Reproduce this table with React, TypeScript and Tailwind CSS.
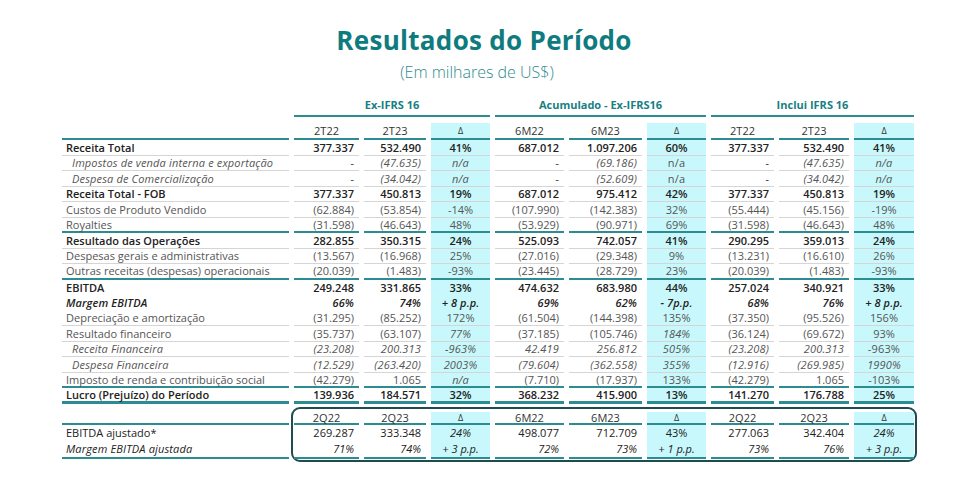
type Kind = 'bold' | 'reg' | 'ital' | 'margin';
type Line = 'gray' | 'teal' | 'thick' | 'none';

interface Row {
  label: string;
  kind: Kind;
  v: string[];
  line: Line;
}

// a leading "*" flips the italic style of that single value
const rows: Row[] = [
  { label: 'Receita Total', kind: 'bold', line: 'gray', v: ['377.337', '532.490', '41%', '687.012', '1.097.206', '60%', '377.337', '532.490', '41%'] },
  { label: 'Impostos de venda interna e exportação', kind: 'ital', line: 'gray', v: ['-', '(47.635)', 'n/a', '-', '(69.186)', '*n/a', '-', '(47.635)', 'n/a'] },
  { label: 'Despesa de Comercialização', kind: 'ital', line: 'gray', v: ['-', '(34.042)', 'n/a', '-', '(52.609)', '*n/a', '-', '(34.042)', 'n/a'] },
  { label: 'Receita Total - FOB', kind: 'bold', line: 'gray', v: ['377.337', '450.813', '19%', '687.012', '975.412', '42%', '377.337', '450.813', '19%'] },
  { label: 'Custos de Produto Vendido', kind: 'reg', line: 'gray', v: ['(62.884)', '(53.854)', '-14%', '(107.990)', '(142.383)', '32%', '(55.444)', '(45.156)', '-19%'] },
  { label: 'Royalties', kind: 'reg', line: 'teal', v: ['(31.598)', '(46.643)', '48%', '(53.929)', '(90.971)', '69%', '(31.598)', '(46.643)', '48%'] },
  { label: 'Resultado das Operações', kind: 'bold', line: 'gray', v: ['282.855', '350.315', '24%', '525.093', '742.057', '41%', '290.295', '359.013', '24%'] },
  { label: 'Despesas gerais e administrativas', kind: 'reg', line: 'gray', v: ['(13.567)', '(16.968)', '25%', '(27.016)', '(29.348)', '9%', '(13.231)', '(16.610)', '26%'] },
  { label: 'Outras receitas (despesas) operacionais', kind: 'reg', line: 'teal', v: ['(20.039)', '(1.483)', '-93%', '(23.445)', '(28.729)', '23%', '(20.039)', '(1.483)', '-93%'] },
  { label: 'EBITDA', kind: 'bold', line: 'none', v: ['249.248', '331.865', '33%', '474.632', '683.980', '44%', '257.024', '340.921', '33%'] },
  { label: 'Margem EBITDA', kind: 'margin', line: 'none', v: ['66%', '74%', '+ 8 p.p.', '69%', '62%', '- 7p.p.', '68%', '76%', '+ 8 p.p.'] },
  { label: 'Depreciação e amortização', kind: 'reg', line: 'gray', v: ['(31.295)', '(85.252)', '172%', '(61.504)', '(144.398)', '135%', '(37.350)', '(95.526)', '156%'] },
  { label: 'Resultado financeiro', kind: 'reg', line: 'gray', v: ['(35.737)', '(63.107)', '*77%', '(37.185)', '(105.746)', '*184%', '(36.124)', '(69.672)', '93%'] },
  { label: 'Receita Financeira', kind: 'ital', line: 'gray', v: ['(23.208)', '200.313', '-963%', '42.419', '256.812', '505%', '(23.208)', '200.313', '*-963%'] },
  { label: 'Despesa Financeira', kind: 'ital', line: 'gray', v: ['(12.529)', '(263.420)', '2003%', '(79.604)', '(362.558)', '355%', '(12.916)', '(269.985)', '1990%'] },
  { label: 'Imposto de renda e contribuição social', kind: 'reg', line: 'teal', v: ['(42.279)', '1.065', '*n/a', '(7.710)', '(17.937)', '133%', '(42.279)', '1.065', '-103%'] },
  { label: 'Lucro (Prejuízo) do Período', kind: 'bold', line: 'thick', v: ['139.936', '184.571', '32%', '368.232', '415.900', '13%', '141.270', '176.788', '25%'] },
];

const groups = ['Ex-IFRS 16', 'Acumulado - Ex-IFRS16', 'Inclui IFRS 16'];
const heads = ['2T22', '2T23', 'Δ', '6M22', '6M23', 'Δ', '2T22', '2T23', 'Δ'];
const heads2 = ['2Q22', '2Q23', 'Δ', '6M22', '6M23', 'Δ', '2Q22', '2Q23', 'Δ'];
const adj = ['269.287', '333.348', '*24%', '498.077', '712.709', '43%', '277.063', '342.404', '*24%'];
const adjMargin = ['71%', '74%', '+ 3 p.p.', '72%', '73%', '+ 1 p.p.', '73%', '76%', '+ 3 p.p.'];

const lineCls: Record<Line, string> = {
  gray: 'border-b border-[#d5d5d5]',
  teal: 'border-b-2 border-[#2b8d92]',
  thick: 'border-b-[3px] border-[#2b8d92]',
  none: '',
};

const kindCls: Record<Kind, string> = {
  bold: 'font-semibold text-[#222]',
  reg: 'text-[#555]',
  ital: 'italic text-[#555] tracking-[0.15px]',
  margin: 'font-semibold italic text-[#222] tracking-[0.1px]',
};

const isDelta = (i: number) => i % 3 === 2;

function Value({ raw, italicRow }: { raw: string; italicRow: boolean }) {
  const flip = raw.startsWith('*');
  const text = flip ? raw.slice(1) : raw;
  const italic = flip ? !italicRow : italicRow;
  return <span className={italic ? 'italic' : 'not-italic'}>{text}</span>;
}

function BodyRow({ row }: { row: Row }) {
  const italicRow = row.kind === 'ital' || row.kind === 'margin';
  return (
    <>
      <div
        className={`h-[15.5px] flex items-center ${row.kind === 'ital' ? 'pl-[10px]' : 'pl-[4px]'} ${lineCls[row.line]} ${kindCls[row.kind]}`}
      >
        {row.label}
      </div>
      {row.v.map((raw, i) => (
        <div
          key={i}
          className={`h-[15.5px] flex items-center ${lineCls[row.line]} ${kindCls[row.kind]} ${
            isDelta(i) ? 'justify-center bg-[#c8f8fb]' : 'justify-end pr-[5px]'
          }`}
        >
          <Value raw={raw} italicRow={italicRow} />
        </div>
      ))}
    </>
  );
}

export default function App() {
  return (
    <div className="w-[976px] h-[477px] bg-white font-['Open_Sans',sans-serif] text-[11px] leading-none overflow-hidden">
      {/* Title */}
      <div className="pt-[25px] h-[55px] flex justify-center items-center pr-[8px]">
        <h1 className="text-[26px] font-bold text-[#0e7b7e] tracking-[0.3px]">Resultados do Período</h1>
      </div>
      <div className="mt-[7px] h-[20px] flex justify-center items-center pr-[22px]">
        <p className="text-[16px] text-[#2f8c90] font-light">(Em milhares de US$)</p>
      </div>

      {/* Main table */}
      <div className="ml-[62px] mt-[14px] grid grid-cols-[227px_65px_62px_59px_69px_73px_59px_63px_70px_60px] gap-x-[5px]">
        <div />
        {groups.map((g) => (
          <div
            key={g}
            className="col-span-3 h-[21px] flex items-end justify-center pb-[5px] border-b-2 border-[#2b8d92] font-bold text-[#187f83]"
          >
            {g}
          </div>
        ))}

        <div className="col-span-10 h-[6px]" />

        <div className="h-[17px] border-b-2 border-[#2b8d92]" />
        {heads.map((h, i) => (
          <div
            key={i}
            className={`h-[17px] flex items-center justify-center border-b-2 border-[#2b8d92] text-[#333] font-medium ${
              isDelta(i) ? 'bg-[#c8f8fb] text-[9px]' : ''
            }`}
          >
            {h}
          </div>
        ))}

        {rows.map((r) => (
          <BodyRow key={r.label} row={r} />
        ))}
      </div>

      {/* Adjusted EBITDA block */}
      <div className="ml-[62px] mt-[3px] flex gap-x-[2px]">
        <div className="w-[227px] pt-[5px] text-[#222]">
          <div className="h-[13px] border-b-2 border-[#2b8d92]" />
          <div className="h-[16px] flex items-center pl-[4px]">EBITDA ajustado*</div>
          <div className="h-[18px] flex items-center pl-[4px] italic tracking-[0.15px] border-b-2 border-[#2b8d92]">
            Margem EBITDA ajustada
          </div>
        </div>
        <div className="w-[626px] border-2 border-[#1d4c51] rounded-[9px] pt-[3px] pb-[1px] px-[1px]">
          <div className="grid grid-cols-[65px_62px_59px_69px_73px_59px_63px_70px_60px] gap-x-[5px]">
            {heads2.map((h, i) => (
              <div
                key={i}
                className={`h-[13px] flex items-center justify-center border-b-2 border-[#2b8d92] text-[#333] ${
                  isDelta(i) ? 'bg-[#c8f8fb] text-[9px]' : ''
                }`}
              >
                {h}
              </div>
            ))}
            {adj.map((raw, i) => (
              <div
                key={i}
                className={`h-[16px] flex items-center text-[#222] font-medium ${
                  isDelta(i) ? 'justify-center bg-[#c8f8fb]' : 'justify-end pr-[5px]'
                }`}
              >
                <Value raw={raw} italicRow={false} />
              </div>
            ))}
            {adjMargin.map((raw, i) => (
              <div
                key={i}
                className={`h-[18px] flex items-center text-[#222] border-b-2 border-[#2b8d92] ${
                  isDelta(i) ? 'justify-center bg-[#c8f8fb]' : 'justify-end pr-[5px]'
                }`}
              >
                <Value raw={raw} italicRow />
              </div>
            ))}
          </div>
        </div>
      </div>
    </div>
  );
}
